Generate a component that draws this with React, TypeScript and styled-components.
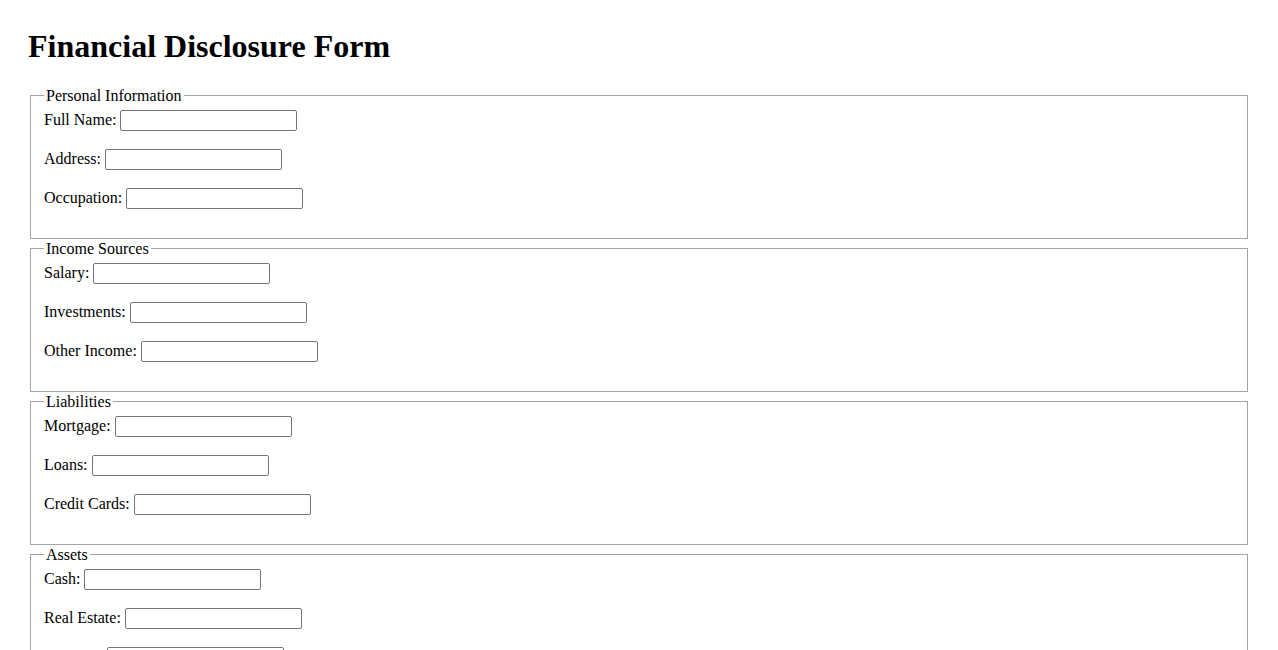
import React from "react";
import styled, { createGlobalStyle } from "styled-components";

const GlobalStyle = createGlobalStyle`
  html, body { background: #fff; }
  body {
    margin: 0;
    padding: 28px;
    font-family: "Liberation Serif", "Times New Roman", serif;
    font-size: 16px;
    color: #000;
  }
`;

const Title = styled.h1`
  margin: 0 0 20.5px;
  font-size: 32px;
  font-weight: bold;
  line-height: 37px;
`;

const Section = styled.fieldset`
  margin: 0 2px;
  padding: 4.5px 13px 11.67px;
  border: 1px solid #a3a3a3;
  min-width: 0;
`;

const Legend = styled.legend`
  padding: 1px 2px 0;
`;

const Row = styled.div`
  display: flex;
  align-items: center;
  gap: 4px;
  height: 22px;
  margin-bottom: 17px;
`;

const Label = styled.label`
  white-space: nowrap;
`;

const TextInput = styled.input`
  box-sizing: border-box;
  width: 177px;
  height: 21px;
  padding: 1px 2px;
  border: 1px solid #767676;
  border-radius: 2px;
  background: #fff;
  font-family: "Liberation Sans", Arial, sans-serif;
  font-size: 13.33px;
`;

const sections: { title: string; fields: string[] }[] = [
  { title: "Personal Information", fields: ["Full Name", "Address", "Occupation"] },
  { title: "Income Sources", fields: ["Salary", "Investments", "Other Income"] },
  { title: "Liabilities", fields: ["Mortgage", "Loans", "Credit Cards"] },
  { title: "Assets", fields: ["Cash", "Real Estate", "Vehicles"] },
];

export default function App() {
  return (
    <>
      <GlobalStyle />
      <Title>Financial Disclosure Form</Title>
      <form>
        {sections.map((s) => (
          <Section key={s.title}>
            <Legend>{s.title}</Legend>
            {s.fields.map((f) => {
              const id = f.toLowerCase().replace(/\s+/g, "-");
              return (
                <Row key={f}>
                  <Label htmlFor={id}>{f}:</Label>
                  <TextInput id={id} type="text" />
                </Row>
              );
            })}
          </Section>
        ))}
      </form>
    </>
  );
}
